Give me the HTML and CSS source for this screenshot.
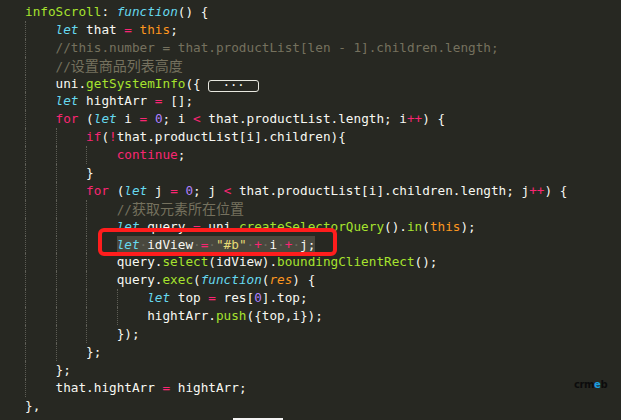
FILE: index.html
```html
<!DOCTYPE html>
<html lang="zh">
<head>
<meta charset="utf-8">
<title>infoScroll</title>
<link rel="stylesheet" href="styles.css">
</head>
<body>
<div class="editor">
  <div class="code">
<div class="ln"><span class="f">infoScroll</span>: <span class="s">function</span>() {</div>
<div class="ln"><span class="ind"></span><span class="s">let</span> that <span class="k">=</span> <span class="t">this</span>;</div>
<div class="ln"><span class="ind"></span><span class="c">//this.number = that.productList[len - 1].children.length;</span></div>
<div class="ln"><span class="ind"></span><span class="c">//<span class="cjk">设置商品列表高度</span></span></div>
<div class="ln"><span class="ind"></span>uni.<span class="f">getSystemInfo</span>({ <span class="fold">···</span></div>
<div class="ln"><span class="ind"></span><span class="s">let</span> hightArr <span class="k">=</span> [];</div>
<div class="ln"><span class="ind"></span><span class="k">for</span> (<span class="s">let</span> i <span class="k">=</span> <span class="n">0</span>; i <span class="k">&lt;</span> that.productList.length; i<span class="k">++</span>) {</div>
<div class="ln"><span class="ind"></span><span class="ind"></span><span class="k">if</span>(<span class="k">!</span>that.productList[i].children){</div>
<div class="ln"><span class="ind"></span><span class="ind"></span><span class="ind"></span><span class="k">continue</span>;</div>
<div class="ln"><span class="ind"></span><span class="ind"></span>}</div>
<div class="ln"><span class="ind"></span><span class="ind"></span><span class="k">for</span> (<span class="s">let</span> j <span class="k">=</span> <span class="n">0</span>; j <span class="k">&lt;</span> that.productList[i].children.length; j<span class="k">++</span>) {</div>
<div class="ln"><span class="ind"></span><span class="ind"></span><span class="ind"></span><span class="c">//<span class="cjk">获取元素所在位置</span></span></div>
<div class="ln"><span class="ind"></span><span class="ind"></span><span class="ind"></span><span class="s">let</span> query <span class="k">=</span> uni.<span class="f">createSelectorQuery</span>().<span class="f">in</span>(<span class="t">this</span>);</div>
<div class="ln"><span class="ind"></span><span class="ind"></span><span class="ind"></span><span class="sel"><span class="s">let</span><span class="ws">·</span>idView<span class="ws">·</span><span class="k">=</span><span class="ws">·</span><span class="str">"#b"</span><span class="ws">·</span><span class="k">+</span><span class="ws">·</span>i<span class="ws">·</span><span class="k">+</span><span class="ws">·</span>j;</span></div>
<div class="ln"><span class="ind"></span><span class="ind"></span><span class="ind"></span>query.<span class="f">select</span>(idView).<span class="f">boundingClientRect</span>();</div>
<div class="ln"><span class="ind"></span><span class="ind"></span><span class="ind"></span>query.<span class="f">exec</span>(<span class="s">function</span>(<span class="p">res</span>) {</div>
<div class="ln"><span class="ind"></span><span class="ind"></span><span class="ind"></span><span class="ind"></span><span class="s">let</span> top <span class="k">=</span> res[<span class="n">0</span>].top;</div>
<div class="ln"><span class="ind"></span><span class="ind"></span><span class="ind"></span><span class="ind"></span>hightArr.<span class="f">push</span>({top,i});</div>
<div class="ln"><span class="ind"></span><span class="ind"></span><span class="ind"></span>});</div>
<div class="ln"><span class="ind"></span><span class="ind"></span>};</div>
<div class="ln"><span class="ind"></span>};</div>
<div class="ln"><span class="ind"></span>that.hightArr <span class="k">=</span> hightArr;</div>
<div class="ln">},</div>
  </div>
  <div class="mark"></div>
  <div class="logo">cr<span class="logo-m">m</span><span class="logo-e">e</span>b</div>
  <div class="strip"></div>
</div>
</body>
</html>
```

FILE: styles.css
```css
html, body {
  margin: 0;
  padding: 0;
  background: #272822;
}

.editor {
  position: relative;
  width: 621px;
  height: 420px;
  overflow: hidden;
  background: #272822;
}

.code {
  padding: 3px 0 0 25px;
  font-family: "DejaVu Sans Mono", "Noto Sans CJK SC", monospace;
  font-size: 12.7px;
  color: #f8f8f2;
}

.ln {
  height: 17.9px;
  line-height: 17.9px;
  white-space: pre;
}

.ind {
  display: inline-block;
  width: 4ch;
  height: 17.9px;
  vertical-align: top;
  border-left: 1px dotted #5d5d55;
  box-sizing: border-box;
}

.k { color: #f92672; }
.s { color: #66d9ef; font-style: italic; }
.f { color: #a6e22e; }
.t { color: #fd971f; }
.n { color: #ae81ff; }
.c { color: #75715e; }
.p { color: #fd971f; font-style: italic; }
.str { color: #e6db74; }

.cjk {
  font-family: "Noto Sans CJK SC", sans-serif;
  font-size: 14px;
  line-height: 17.9px;
}

.fold {
  display: inline-block;
  width: 7ch;
  height: 12px;
  line-height: 8px;
  border: 1px solid #e8e8e0;
  border-radius: 3px;
  box-sizing: border-box;
  text-align: center;
  vertical-align: -1px;
  font-size: 12px;
  color: #f8f8f2;
}

.sel {
  display: inline-block;
  height: 17.9px;
  vertical-align: top;
  background: #49483e;
}

.ws { color: #6a6a5e; }

.mark {
  position: absolute;
  left: 98px;
  top: 228px;
  width: 239px;
  height: 28px;
  box-sizing: border-box;
  border: 4px solid #ff1d1d;
  border-radius: 6px;
}

.logo {
  position: absolute;
  left: 574px;
  top: 379px;
  font-family: "DejaVu Sans", sans-serif;
  font-weight: bold;
  font-size: 10px;
  letter-spacing: -0.4px;
  color: #0c0c0c;
}

.logo-e { color: #1a9ee0; }

.strip {
  position: absolute;
  left: 233px;
  top: 418px;
  width: 50px;
  height: 2px;
  background: #f4f4f4;
}
```
